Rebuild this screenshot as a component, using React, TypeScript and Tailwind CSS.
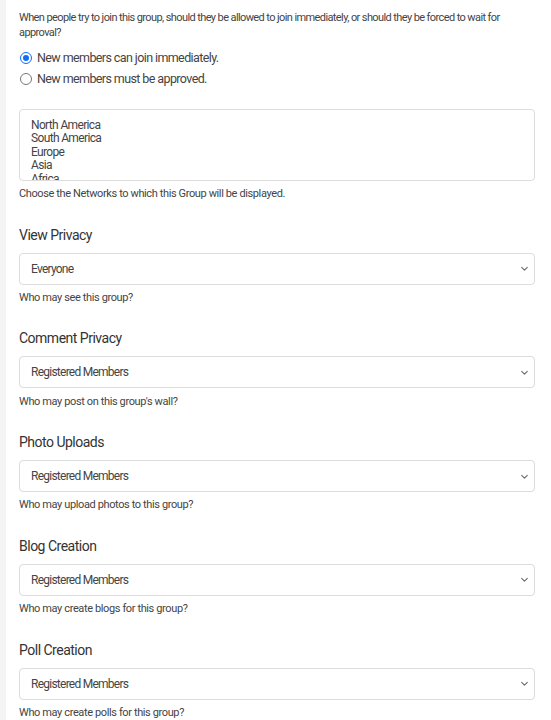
import React from 'react';

const SECTIONS = [
  { title: 'View Privacy', value: 'Everyone', help: 'Who may see this group?' },
  { title: 'Comment Privacy', value: 'Registered Members', help: "Who may post on this group's wall?" },
  { title: 'Photo Uploads', value: 'Registered Members', help: 'Who may upload photos to this group?' },
  { title: 'Blog Creation', value: 'Registered Members', help: 'Who may create blogs for this group?' },
  { title: 'Poll Creation', value: 'Registered Members', help: 'Who may create polls for this group?' },
];

const NETWORKS = ['North America', 'South America', 'Europe', 'Asia', 'Africa', 'Oceania'];

const Chevron = () => (
  <svg width="9" height="9" viewBox="0 0 16 16" className="text-[#666]">
    <path d="M3 6l5 5 5-5" fill="none" stroke="currentColor" strokeWidth="1.8" strokeLinecap="round" strokeLinejoin="round" />
  </svg>
);

const Radio = ({ checked }: { checked: boolean }) => (
  <span
    className={`flex h-[12px] w-[12px] shrink-0 items-center justify-center rounded-full border ${
      checked ? 'border-[#0d6efd]' : 'border-[#777]'
    }`}
  >
    {checked && <span className="h-[6px] w-[6px] rounded-full bg-[#0d6efd]" />}
  </span>
);

export default function App() {
  return (
    <div className="flex min-h-[720px] bg-white font-['Roboto','Liberation_Sans',sans-serif]">
      <div className="w-[6px] shrink-0 bg-[#f4f4f4]" />
      <div className="ml-[13px] mr-[16px] flex-1 pb-6">
        {/* Join policy */}
        <p className="pt-[10px] text-[11px] leading-[15px] tracking-[-0.6px] text-[#444]">
          When people try to join this group, should they be allowed to join immediately, or should they be forced to wait for approval?
        </p>
        <div className="mt-[10px] flex items-center gap-[5px] pl-[1px] text-[12.5px] leading-[16px] tracking-[-0.6px] text-[#444]">
          <Radio checked />
          <span>New members can join immediately.</span>
        </div>
        <div className="mt-[5px] flex items-center gap-[5px] pl-[1px] text-[12.5px] leading-[16px] tracking-[-0.6px] text-[#444]">
          <Radio checked={false} />
          <span>New members must be approved.</span>
        </div>

        {/* Networks */}
        <div className="mt-[22px] h-[72px] overflow-hidden rounded-[4px] border border-[#dcdcdc] px-[11px] pt-[8.5px]">
          {NETWORKS.map((n) => (
            <div key={n} className="text-[12px] leading-[13.6px] tracking-[-0.65px] text-[#444]">
              {n}
            </div>
          ))}
        </div>
        <p className="mt-[5px] text-[11px] leading-[15px] tracking-[-0.38px] text-[#444]">
          Choose the Networks to which this Group will be displayed.
        </p>

        {SECTIONS.map((s) => (
          <div key={s.title}>
            <h3 className="mt-[23.5px] text-[14px] leading-[20px] tracking-[-0.5px] text-[#333]">{s.title}</h3>
            <div className="mt-[8px] flex h-[32px] items-center justify-between rounded-[4px] border border-[#dcdcdc] pl-[11px] pr-[5px] text-[12px] tracking-[-0.75px] text-[#444]">
              <span>{s.value}</span>
              <Chevron />
            </div>
            <p className="mt-[5.25px] text-[11px] leading-[15px] tracking-[-0.38px] text-[#444]">{s.help}</p>
          </div>
        ))}
      </div>
    </div>
  );
}
